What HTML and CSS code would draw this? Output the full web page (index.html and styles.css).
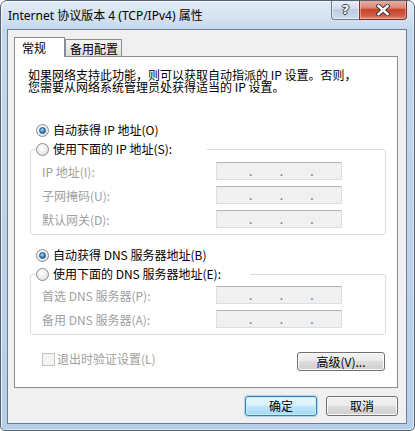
FILE: index.html
```html
<!DOCTYPE html>
<html lang="zh-CN">
<head>
    <meta charset="UTF-8">
    <title>Internet 协议版本 4 (TCP/IPv4) 属性</title>
    <link rel="stylesheet" href="styles.css">
</head>
<body>

<div class="window">
    <div class="titlebar">
        <span class="title">Internet 协议版本 4 (TCP/IPv4) 属性</span>
        <div class="caption">
            <div class="cap help"><span>?</span></div>
            <div class="cap close">
                <svg width="14" height="12" viewBox="0 0 14 12">
                    <path d="M2.5 2 L11.5 10 M11.5 2 L2.5 10" stroke="#3a3a3a" stroke-width="4.4" stroke-linecap="square"/>
                    <path d="M2.5 2 L11.5 10 M11.5 2 L2.5 10" stroke="#ffffff" stroke-width="2.4" stroke-linecap="square"/>
                </svg>
            </div>
        </div>
    </div>

    <div class="client">
        <div class="tabs">
            <div class="tab active">常规</div>
            <div class="tab">备用配置</div>
        </div>

        <div class="panel">
            <div class="intro">
                <div>如果网络支持此功能，则可以获取自动指派的 IP 设置。否则，</div>
                <div>您需要从网络系统管理员处获得适当的 IP 设置。</div>
            </div>

            <div class="option first"><span class="radio on"></span>自动获得 IP 地址(O)</div>
            <fieldset class="group">
                <legend class="option ip-legend"><span class="radio"></span>使用下面的 IP 地址(S):</legend>
                <div class="row"><span class="label">IP 地址(I):</span><div class="ipbox"><span>.</span><span>.</span><span>.</span></div></div>
                <div class="row"><span class="label">子网掩码(U):</span><div class="ipbox"><span>.</span><span>.</span><span>.</span></div></div>
                <div class="row"><span class="label">默认网关(D):</span><div class="ipbox"><span>.</span><span>.</span><span>.</span></div></div>
            </fieldset>

            <div class="option second"><span class="radio on"></span>自动获得 DNS 服务器地址(B)</div>
            <fieldset class="group dns">
                <legend class="option dns-legend"><span class="radio"></span>使用下面的 DNS 服务器地址(E):</legend>
                <div class="row"><span class="label">首选 DNS 服务器(P):</span><div class="ipbox"><span>.</span><span>.</span><span>.</span></div></div>
                <div class="row"><span class="label">备用 DNS 服务器(A):</span><div class="ipbox"><span>.</span><span>.</span><span>.</span></div></div>
            </fieldset>

            <div class="bottom-row">
                <div class="check"><span class="box"></span>退出时验证设置(L)</div>
                <button class="btn advanced">高级(V)...</button>
            </div>
        </div>

        <div class="footer">
            <button class="btn default">确定</button>
            <button class="btn">取消</button>
        </div>
    </div>
</div>

</body>
</html>
```

FILE: styles.css
```css
body {
    margin: 0;
    background-color: #ffffff;
    font-family: "Noto Sans CJK SC", sans-serif;
    font-size: 12px;
    color: #000000;
}

.window {
    width: 415px;
    height: 431px;
    box-sizing: border-box;
    border: 1px solid #55626f;
    border-radius: 7px 7px 5px 5px;
    padding: 0 7px 6px 6px;
    background: linear-gradient(to bottom, #e3ecf7 0px, #d3e1f0 18px, #c3d7ec 29px, #b7cfe9 100%);
    box-shadow: inset 1px 1px 0 rgba(255, 255, 255, 0.7), inset -1px -1px 0 rgba(255, 255, 255, 0.5);
    display: flex;
    flex-direction: column;
    overflow: hidden;
}

.titlebar {
    height: 28px;
    display: flex;
    justify-content: space-between;
    align-items: flex-start;
}

.title {
    font-family: "Noto Sans", "Noto Sans CJK SC", sans-serif;
    font-size: 12px;
    line-height: 16px;
    margin: 7px 0 0 1px;
    color: #000000;
}

.caption {
    display: flex;
    margin-top: -1px;
}

.cap {
    height: 20px;
    box-sizing: border-box;
    display: flex;
    justify-content: center;
    align-items: center;
    border: 1px solid #6b7a8c;
    border-top: none;
}

.cap.help {
    width: 28px;
    border-right: none;
    border-radius: 0 0 0 4px;
    background: linear-gradient(to bottom, #e9f0f8 0%, #d3dfec 45%, #bccde1 50%, #cddcec 100%);
    box-shadow: inset 0 0 0 1px rgba(255, 255, 255, 0.55);
}

.cap.help span {
    font-family: "DejaVu Sans", sans-serif;
    font-weight: bold;
    font-size: 13px;
    line-height: 14px;
    color: #ffffff;
    text-shadow: 1px 0 0 #3a3a3a, -1px 0 0 #3a3a3a, 0 1px 0 #3a3a3a, 0 -1px 0 #3a3a3a;
}

.cap.close {
    width: 48px;
    border-color: #7b2e22;
    border-radius: 0 0 4px 0;
    background: linear-gradient(to bottom, #eab2a6 0%, #dc8673 42%, #c7452c 50%, #cf5a41 80%, #e08b70 100%);
    box-shadow: inset 0 0 0 1px rgba(255, 220, 210, 0.45);
}

.client {
    flex: 1;
    box-sizing: border-box;
    border: 1px solid #6f7d8c;
    background-color: #f0f0f0;
    padding: 7px 8px 0 6px;
    display: flex;
    flex-direction: column;
}

.tabs {
    display: flex;
    align-items: flex-end;
    height: 19px;
}

.tab {
    box-sizing: border-box;
    height: 17px;
    width: 57px;
    padding: 2px 0 0 4px;
    line-height: 14px;
    border: 1px solid #898c95;
    border-bottom: none;
    background: linear-gradient(to bottom, #f4f4f4 0%, #ebebeb 50%, #dddddd 100%);
}

.tab.active {
    position: relative;
    z-index: 1;
    width: 51px;
    height: 20px;
    margin-bottom: -1px;
    padding: 2px 0 0 7px;
    line-height: 16px;
    background: #ffffff;
}

.panel {
    box-sizing: border-box;
    width: 384px;
    height: 332px;
    border: 1px solid #898c95;
    background-color: #ffffff;
    padding: 11px 0 0 0;
}

.intro {
    margin: 0 0 0 13px;
    line-height: 13px;
    white-space: nowrap;
}

.intro div {
    height: 12px;
    overflow: visible;
}

.option {
    display: flex;
    align-items: center;
    height: 16px;
    line-height: 16px;
    white-space: nowrap;
}

.option.first {
    margin: 30px 0 0 21px;
}

.option.second {
    margin: 12px 0 0 21px;
}

.radio {
    width: 13px;
    height: 13px;
    box-sizing: border-box;
    border-radius: 50%;
    border: 1px solid #8a8c8e;
    background: radial-gradient(circle at 40% 35%, #ffffff 0%, #ececec 55%, #d2d2d2 100%);
    margin-right: 4px;
    display: flex;
    justify-content: center;
    align-items: center;
    flex-shrink: 0;
}

.radio.on::after {
    content: "";
    width: 7px;
    height: 7px;
    box-sizing: border-box;
    border-radius: 50%;
    border: 1px solid #24527c;
    background: radial-gradient(circle at 40% 35%, #b4e4fb 0%, #3f92d3 45%, #1b4f86 100%);
}

.group {
    margin: 3px 0 0 15px;
    padding: 0 0 6px 0;
    width: 356px;
    box-sizing: border-box;
    border: 1px solid #d5dfe5;
    border-radius: 3px;
    min-width: 0;
}

.group legend {
    padding: 0;
    margin-left: 5px;
    background-color: #ffffff;
}

.ip-legend {
    width: 171px;
}

.dns-legend {
    width: 214px;
}

.row {
    display: flex;
    justify-content: space-between;
    align-items: center;
    height: 18px;
    margin: 6px 0 0 11px;
    padding-right: 43px;
}

.row:first-of-type {
    margin-top: 5px;
}

.dns .row:first-of-type {
    margin-top: 4px;
}

.label {
    color: #a0a0a0;
    white-space: nowrap;
}

.ipbox {
    width: 126px;
    height: 18px;
    box-sizing: border-box;
    border: 1px solid #dadfe6;
    border-top-color: #adb2b5;
    background-color: #f0f0f0;
    display: flex;
    padding-left: 32px;
    color: #6d6d6d;
    line-height: 15px;
}

.ipbox span {
    width: 31px;
}

.bottom-row {
    display: flex;
    justify-content: space-between;
    align-items: flex-start;
    margin: 17px 12px 0 27px;
}

.check {
    display: flex;
    align-items: center;
    height: 14px;
    color: #a0a0a0;
    line-height: 14px;
}

.check .box {
    width: 13px;
    height: 13px;
    box-sizing: border-box;
    border: 1px solid #c2c2c2;
    background-color: #f4f4f4;
    margin-right: 2px;
}

.btn {
    box-sizing: border-box;
    width: 72px;
    height: 20px;
    padding: 0;
    border: 1px solid #707070;
    border-radius: 3px;
    background: linear-gradient(to bottom, #f2f2f2 0%, #ebebeb 50%, #dddddd 50%, #cfcfcf 100%);
    box-shadow: inset 0 0 0 1px #fbfbfb;
    font-family: "Noto Sans CJK SC", sans-serif;
    font-size: 12px;
    line-height: 16px;
    color: #000000;
}

.btn.advanced {
    width: 88px;
    height: 19px;
    line-height: 15px;
}

.btn.default {
    border-color: #3c7fb1;
    background: linear-gradient(to bottom, #eaf6fd 0%, #d9f0fc 50%, #bee6fd 50%, #a7d9f5 100%);
    box-shadow: inset 0 0 0 1px #c6eefc, 0 0 1px 1px rgba(120, 200, 240, 0.6);
}

.footer {
    display: flex;
    justify-content: flex-end;
    gap: 9px;
    margin-top: 8px;
}
```
